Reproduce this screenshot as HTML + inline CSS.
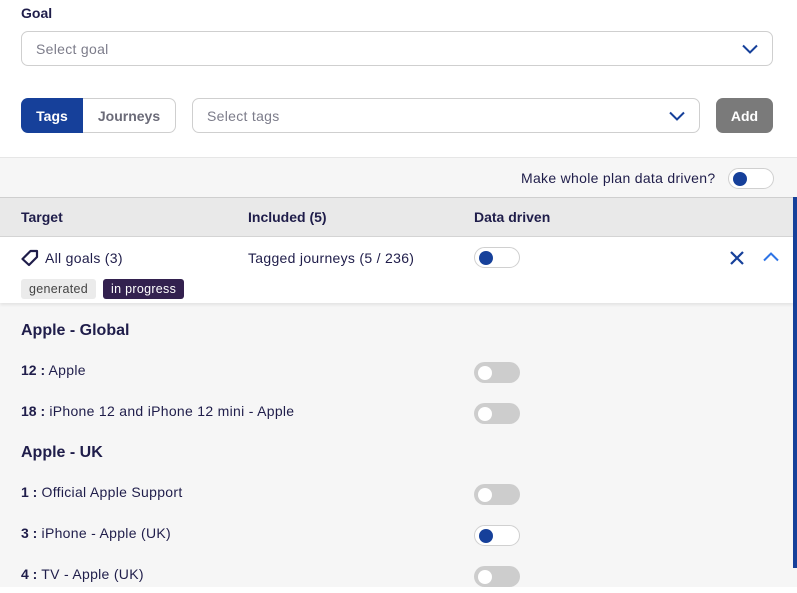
<!DOCTYPE html>
<html><head><meta charset="utf-8"><style>
*{box-sizing:border-box;margin:0;padding:0}
body{width:797px;height:593px;overflow:hidden;background:#fff;font-family:"Liberation Sans",Arial,sans-serif;color:#1f1d4a;position:relative;font-size:14px;letter-spacing:0.3px}
.a{position:absolute}
.b{font-weight:bold;letter-spacing:0}
b{letter-spacing:0}
.sel{position:absolute;border:1px solid #cfcfcf;border-radius:7px;background:#fff;color:#7c7c8a;font-size:14px;padding-left:14px;display:flex;align-items:center}
.tg{position:absolute;width:46px;height:21px;border-radius:11px}
.tg.on{background:#fff;border:1px solid #d0d0d0}
.tg.on::after{content:"";position:absolute;left:4px;top:3px;width:14px;height:14px;border-radius:50%;background:#16409a}
.tg.off{background:#cdcdcd}
.tg.off::after{content:"";position:absolute;left:4px;top:3.5px;width:14px;height:14px;border-radius:50%;background:#fff}
</style></head><body>
<div class="a b" style="left:21px;top:5px;font-size:14px">Goal</div>
<div class="sel" style="left:21px;top:31px;width:752px;height:35px">Select goal
<svg class="a" style="right:13px;top:11px" width="18" height="12" viewBox="0 0 18 12"><path d="M2 2.5L9 9.5L16 2.5" fill="none" stroke="#16409a" stroke-width="2"/></svg></div>

<div class="a b" style="left:21px;top:98px;width:62px;height:35px;background:#16409a;color:#fff;border-radius:7px 0 0 7px;display:flex;align-items:center;justify-content:center">Tags</div>
<div class="a b" style="left:83px;top:98px;width:93px;height:35px;border:1px solid #cfcfcf;border-left:none;border-radius:0 7px 7px 0;color:#6b6b78;display:flex;align-items:center;justify-content:center">Journeys</div>
<div class="sel" style="left:192px;top:98px;width:508px;height:35px">Select tags
<svg class="a" style="right:13px;top:11px" width="18" height="12" viewBox="0 0 18 12"><path d="M2 2.5L9 9.5L16 2.5" fill="none" stroke="#16409a" stroke-width="2"/></svg></div>
<div class="a b" style="left:716px;top:98px;width:57px;height:35px;background:#7a7a7a;color:#fff;border-radius:7px;display:flex;align-items:center;justify-content:center">Add</div>

<div class="a" style="left:0;top:157px;width:797px;height:430px;background:#f6f6f6;border-top:1px solid #e6e6e6"></div>
<div class="a" style="left:521px;top:170px">Make whole plan data driven?</div>
<div class="tg on" style="left:728px;top:168px"></div>

<div class="a" style="left:0;top:197px;width:793px;height:40px;background:#e9e9e9;border-top:1px solid #cfcfcf;border-bottom:1px solid #d4d4d4"></div>
<div class="a b" style="left:21px;top:209px">Target</div>
<div class="a b" style="left:248px;top:209px">Included (5)</div>
<div class="a b" style="left:474px;top:209px">Data driven</div>
<div class="a" style="left:793px;top:197px;width:4px;height:371px;background:#16409a"></div>

<div class="a" style="left:0;top:237px;width:793px;height:66px;background:#fff;box-shadow:0 2px 3px rgba(0,0,0,0.08)"></div>
<svg class="a" style="left:20px;top:248px" width="20" height="20" viewBox="0 0 20 20"><path d="M2.5 11L10.5 3L17 3L17 9L9 17Z" fill="none" stroke="#1f1d4a" stroke-width="2.2" stroke-linejoin="round"/></svg>
<div class="a" style="left:45px;top:250px">All goals (3)</div>
<div class="a" style="left:248px;top:250px">Tagged journeys (5 / 236)</div>
<div class="tg on" style="left:474px;top:247px"></div>
<svg class="a" style="left:729px;top:250px" width="16" height="16" viewBox="0 0 16 16"><path d="M2 2L14 14M14 2L2 14" stroke="#16409a" stroke-width="2.2"/></svg>
<svg class="a" style="left:762px;top:251px" width="18" height="12" viewBox="0 0 18 12"><path d="M2 9.5L9 2.5L16 9.5" fill="none" stroke="#2e74e6" stroke-width="2"/></svg>
<div class="a" style="left:21px;top:279px;height:20px;padding:0 8px;background:#ebebeb;border-radius:3px;font-size:12.5px;color:#444;line-height:20px">generated</div>
<div class="a" style="left:103px;top:279px;height:20px;padding:0 8px;background:#33214f;border-radius:3px;font-size:12.5px;color:#fff;line-height:20px">in progress</div>

<div class="a b" style="left:21px;top:322px;font-size:16px">Apple - Global</div>
<div class="a" style="left:21px;top:362px"><b>12 :</b> Apple</div>
<div class="tg off" style="left:474px;top:362px"></div>
<div class="a" style="left:21px;top:403px"><b>18 :</b> iPhone 12 and iPhone 12 mini - Apple</div>
<div class="tg off" style="left:474px;top:403px"></div>
<div class="a b" style="left:21px;top:444px;font-size:16px">Apple - UK</div>
<div class="a" style="left:21px;top:484px"><b>1 :</b> Official Apple Support</div>
<div class="tg off" style="left:474px;top:484px"></div>
<div class="a" style="left:21px;top:525px"><b>3 :</b> iPhone - Apple (UK)</div>
<div class="tg on" style="left:474px;top:525px"></div>
<div class="a" style="left:21px;top:566px"><b>4 :</b> TV - Apple (UK)</div>
<div class="tg off" style="left:474px;top:566px"></div>
</body></html>
